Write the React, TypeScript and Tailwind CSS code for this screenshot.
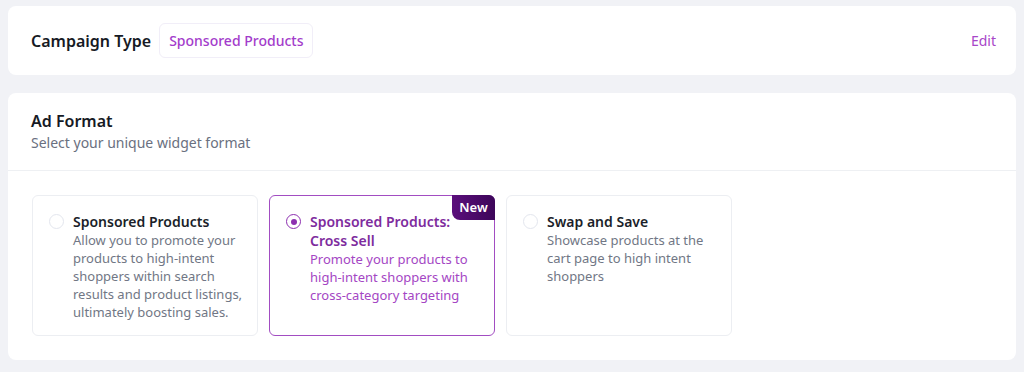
import React from "react";

const formats = [
    {
        id: "sp",
        title: "Sponsored Products",
        details: "Allow you to promote your products to high-intent shoppers within search results and product listings, ultimately boosting sales.",
    },
    {
        id: "cross",
        title: "Sponsored Products: Cross Sell",
        details: "Promote your products to high-intent shoppers with cross-category targeting",
        isNew: true,
    },
    {
        id: "swap",
        title: "Swap and Save",
        details: "Showcase products at the cart page to high intent shoppers",
    },
];

function FormatCard({ format, selected }: { format: any; selected: boolean }) {
    return (
        <div
            className={
                selected
                    ? "relative w-[226px] h-[141px] rounded-md border border-[#a24dc2] bg-white pl-4 pr-2 pt-4"
                    : "relative w-[226px] h-[141px] rounded-md border border-[#eceef2] bg-white pl-4 pr-2 pt-4"
            }
        >
            {format.isNew && (
                <div className="absolute -top-px -right-px h-[25px] w-[43px] rounded-tr-md rounded-bl-lg bg-gradient-to-r from-[#5b0f7c] to-[#3d0659] text-white text-[13px] font-semibold flex items-center justify-center">
                    New
                </div>
            )}
            <div className="flex gap-[9px]">
                {selected ? (
                    <span className="mt-[2px] w-[15px] h-[15px] shrink-0 rounded-full border-[1.5px] border-[#8d2fb0] flex items-center justify-center">
                        <span className="w-[6px] h-[6px] rounded-full bg-[#8d2fb0]" />
                    </span>
                ) : (
                    <span className="mt-[2px] w-[15px] h-[15px] shrink-0 rounded-full border border-[#e3e6ee]" />
                )}
                <div>
                    <div className={selected ? "pr-8 text-[14px] leading-[19px] font-semibold text-[#7e2c9e]" : "text-[14px] leading-[19px] font-semibold text-[#1b1f2a]"}>
                        {format.title}
                    </div>
                    <div className={selected ? "text-[13px] leading-[18px] text-[#a446c4]" : "text-[13px] leading-[18px] text-[#717785]"}>
                        {format.details}
                    </div>
                </div>
            </div>
        </div>
    );
}

export default function App() {
    const [selected] = React.useState("cross");

    return (
        <main className="min-h-[372px] bg-[#f1f2f6] px-2 pt-1.5 pb-3 font-['Noto_Sans',sans-serif]">
            <div className="h-[69px] bg-white rounded-lg flex items-center justify-between pl-[23px] pr-5">
                <div className="flex items-center gap-2">
                    <span className="text-[16px] font-semibold text-[#161a24]">Campaign Type</span>
                    <span className="h-[35px] px-[9px] flex items-center rounded-md border border-[#f1eef8] text-[14px] font-medium text-[#a33ccb]">
                        Sponsored Products
                    </span>
                </div>
                <button className="text-[14px] text-[#a846c8]">Edit</button>
            </div>

            <div className="mt-[18px] bg-white rounded-lg">
                <div className="pl-[23px] pt-4 pb-[17px] border-b border-[#eef0f3]">
                    <div className="text-[16px] leading-6 font-semibold text-[#161a24]">Ad Format</div>
                    <div className="text-[14px] leading-5 text-[#6a7080]">Select your unique widget format</div>
                </div>
                <div className="px-6 pt-6 pb-6 flex gap-[11px]">
                    {formats.map((format) => (
                        <FormatCard key={format.id} format={format} selected={format.id === selected} />
                    ))}
                </div>
            </div>
        </main>
    );
}
